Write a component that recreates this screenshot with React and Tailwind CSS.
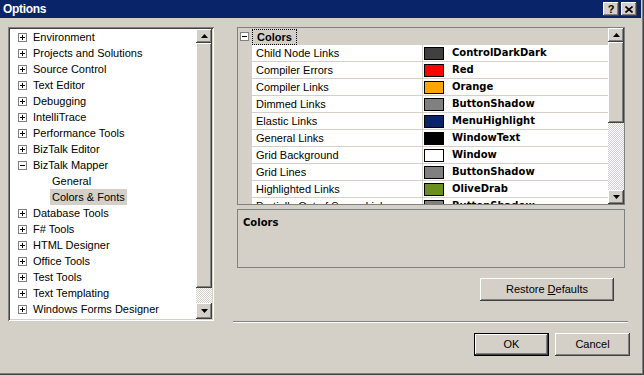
import React from 'react';

const treeItems = [
  { label: 'Environment', kind: 'plus' },
  { label: 'Projects and Solutions', kind: 'plus' },
  { label: 'Source Control', kind: 'plus' },
  { label: 'Text Editor', kind: 'plus' },
  { label: 'Debugging', kind: 'plus' },
  { label: 'IntelliTrace', kind: 'plus' },
  { label: 'Performance Tools', kind: 'plus' },
  { label: 'BizTalk Editor', kind: 'plus' },
  { label: 'BizTalk Mapper', kind: 'minus' },
  { label: 'General', kind: 'child' },
  { label: 'Colors & Fonts', kind: 'child', selected: true },
  { label: 'Database Tools', kind: 'plus' },
  { label: 'F# Tools', kind: 'plus' },
  { label: 'HTML Designer', kind: 'plus' },
  { label: 'Office Tools', kind: 'plus' },
  { label: 'Test Tools', kind: 'plus' },
  { label: 'Text Templating', kind: 'plus' },
  { label: 'Windows Forms Designer', kind: 'plus' },
  { label: 'Workflow Designer', kind: 'plus' },
];

const colorRows = [
  { name: 'Child Node Links', value: 'ControlDarkDark', swatch: 'bg-[#404040]' },
  { name: 'Compiler Errors', value: 'Red', swatch: 'bg-[#ff0000]' },
  { name: 'Compiler Links', value: 'Orange', swatch: 'bg-[#ffa500]' },
  { name: 'Dimmed Links', value: 'ButtonShadow', swatch: 'bg-[#808080]' },
  { name: 'Elastic Links', value: 'MenuHighlight', swatch: 'bg-[#0a246a]' },
  { name: 'General Links', value: 'WindowText', swatch: 'bg-[#000000]' },
  { name: 'Grid Background', value: 'Window', swatch: 'bg-[#ffffff]' },
  { name: 'Grid Lines', value: 'ButtonShadow', swatch: 'bg-[#808080]' },
  { name: 'Highlighted Links', value: 'OliveDrab', swatch: 'bg-[#6b8e23]' },
  { name: 'Partially Out of Scope Links', value: 'ButtonShadow', swatch: 'bg-[#808080]' },
];

const raised =
  'shadow-[inset_-1px_-1px_0_#404040,inset_1px_1px_0_#ffffff,inset_-2px_-2px_0_#808080,inset_2px_2px_0_#d4d0c8]';
const sunken =
  'shadow-[inset_1px_1px_0_#808080,inset_-1px_-1px_0_#ffffff,inset_2px_2px_0_#404040,inset_-2px_-2px_0_#d4d0c8]';
const checker =
  'bg-[repeating-conic-gradient(#ffffff_0%_25%,#d4d0c8_0%_50%)] bg-size-[2px_2px]';

const ExpandBox = ({ open }) => (
  <svg width="9" height="9" viewBox="0 0 9 9" className="shrink-0">
    <rect x="0.5" y="0.5" width="8" height="8" fill="#fff" stroke="#808080" />
    <line x1="2" y1="4.5" x2="7" y2="4.5" stroke="#000" />
    {!open && <line x1="4.5" y1="2" x2="4.5" y2="7" stroke="#000" />}
  </svg>
);

const Arrow = ({ down }) => (
  <svg width="7" height="4" viewBox="0 0 7 4">
    {down ? <polygon points="0,0 7,0 3.5,4" fill="#000" /> : <polygon points="3.5,0 7,4 0,4" fill="#000" />}
  </svg>
);

const ScrollBtn = ({ down, h = 'h-[15px]' }) => (
  <div className={`${h} w-full bg-[#d4d0c8] ${raised} flex items-center justify-center shrink-0`}>
    <Arrow down={down} />
  </div>
);

const TreeRow = ({ item }) => {
  if (item.kind === 'child') {
    return (
      <div className="h-[16px] flex items-center pl-[40px]">
        <span className={`px-[2px] leading-[16px] ${item.selected ? 'bg-[#d4d0c8]' : ''}`}>{item.label}</span>
      </div>
    );
  }
  return (
    <div className="h-[16px] flex items-center pl-[8px] gap-[6px]">
      <ExpandBox open={item.kind === 'minus'} />
      <span className="whitespace-nowrap leading-[16px]">{item.label}</span>
    </div>
  );
};

const Button = ({ children, primary, className = '' }) => (
  <div
    className={`h-[23px] bg-[#d4d0c8] flex items-center justify-center ${
      primary ? 'border border-black' : ''
    } ${className}`}
  >
    <div className={`w-full h-full flex items-center justify-center ${raised}`}>{children}</div>
  </div>
);

export default function App() {
  return (
    <div className="w-[644px] h-[375px] bg-[#d4d0c8] flex flex-col text-[11px] text-black font-['Liberation_Sans',Arial,sans-serif] overflow-hidden shadow-[inset_-1px_-1px_0_#404040,inset_-2px_-2px_0_#808080,inset_-3px_-3px_0_#d4d0c8]">
      {/* Title bar */}
      <div className="h-[18px] w-[641px] bg-[#0a246a] flex items-center shrink-0">
        <span className="ml-[3px] text-white font-bold text-[12px] font-['Liberation_Sans_Narrow','Liberation_Sans',sans-serif] tracking-[-0.3px]">
          Options
        </span>
        <div className="ml-auto mr-[4px] flex gap-[2px]">
          <div className={`w-[16px] h-[14px] bg-[#d4d0c8] ${raised} flex items-center justify-center font-bold text-[11px] leading-none`}>
            ?
          </div>
          <div className={`w-[16px] h-[14px] bg-[#d4d0c8] ${raised} flex items-center justify-center`}>
            <svg width="8" height="7" viewBox="0 0 8 7">
              <path d="M0.5 0.5 L7.5 6.5 M7.5 0.5 L0.5 6.5" stroke="#000" strokeWidth="1.6" />
            </svg>
          </div>
        </div>
      </div>

      {/* Body */}
      <div className="flex mt-[9px] shrink-0">
        {/* Tree */}
        <div className={`ml-[8px] w-[206px] h-[294px] p-[2px] bg-white ${sunken} flex`}>
          <div className="flex-1 bg-white overflow-hidden flex flex-col">
            {treeItems.map((item) => (
              <TreeRow key={item.label} item={item} />
            ))}
          </div>
          <div className="w-[16px] flex flex-col">
            <ScrollBtn h="h-[14px]" />
            <div className={`h-[245px] bg-[#d4d0c8] ${raised} shrink-0`} />
            <div className={`flex-1 ${checker}`} />
            <ScrollBtn down h="h-[16px]" />
          </div>
        </div>

        {/* Right side */}
        <div className="ml-[23px] w-[388px] flex flex-col">
          {/* Property grid */}
          <div className="h-[178px] border border-[#808080] bg-[#d4d0c8] flex overflow-hidden">
            <div className="flex-1 flex flex-col overflow-hidden">
              <div className="h-[17px] flex items-center shrink-0">
                <div className="ml-[2px]">
                  <ExpandBox open />
                </div>
                <span className="ml-[3px] px-[4px] h-[16px] leading-[14px] border border-dotted border-black font-bold">
                  Colors
                </span>
              </div>
              {colorRows.map((row) => (
                <div key={row.name} className="h-[17px] flex shrink-0 pl-[14px]">
                  <div className="flex-1 flex bg-white border-b border-[#d4d0c8]">
                    <div className="w-[171px] pl-[4px] border-r border-[#d4d0c8] leading-[16px] whitespace-nowrap overflow-hidden">
                      {row.name}
                    </div>
                    <div className="flex-1 flex items-center pl-[1px]">
                      <div className={`w-[20px] h-[13px] border border-black ${row.swatch}`} />
                      <span className="ml-[8px] font-bold text-[10px] font-['DejaVu_Sans',sans-serif] leading-[16px]">
                        {row.value}
                      </span>
                    </div>
                  </div>
                </div>
              ))}
            </div>
            <div className="w-[16px] flex flex-col">
              <ScrollBtn h="h-[14px]" />
              <div className={`h-[81px] bg-[#d4d0c8] ${raised} shrink-0`} />
              <div className={`flex-1 ${checker}`} />
              <ScrollBtn down h="h-[14px]" />
            </div>
          </div>

          {/* Description */}
          <div className="mt-[4px] h-[59px] border border-[#808080] px-[5px] pt-[4px]">
            <span className="font-bold text-[10px] font-['DejaVu_Sans',sans-serif]">Colors</span>
          </div>

          <Button className="mt-[10px] self-end mr-[11px] w-[134px]">
            <span>
              Restore <span className="underline">D</span>efaults
            </span>
          </Button>
        </div>
      </div>

      {/* Separator */}
      <div className="mt-[0px] ml-[233px] w-[395px] h-[2px] border-t border-[#808080] border-b border-b-white shrink-0" />

      {/* Footer buttons */}
      <div className="mt-[10px] ml-[474px] flex gap-[6px]">
        <Button primary className="w-[75px]">OK</Button>
        <Button className="w-[75px]">Cancel</Button>
      </div>
    </div>
  );
}
